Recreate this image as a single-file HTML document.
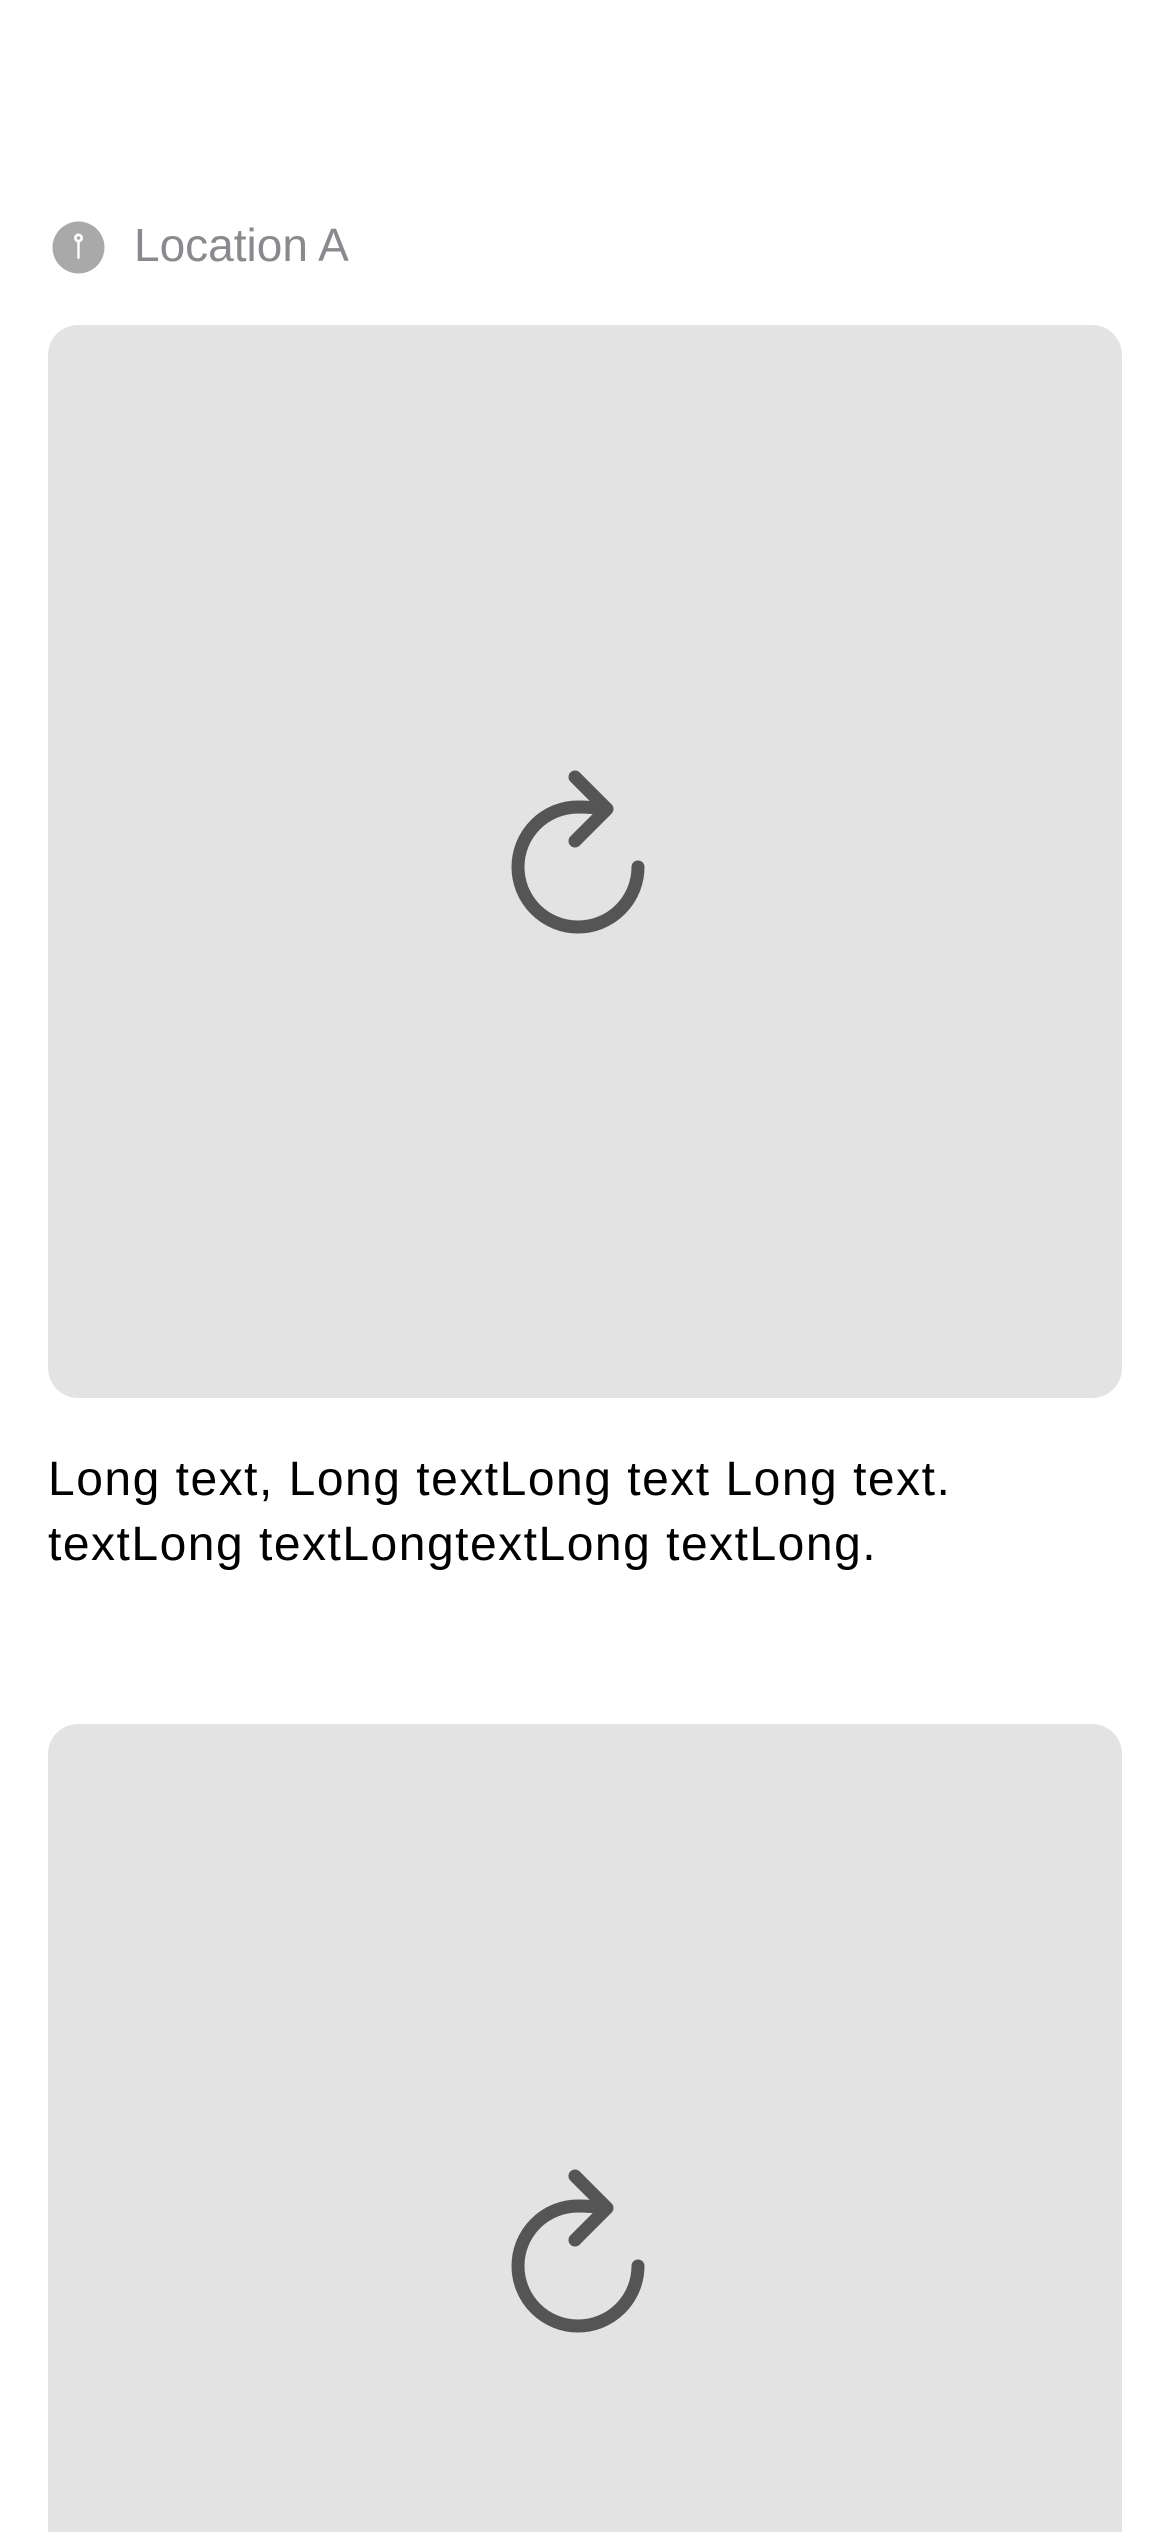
<!DOCTYPE html>
<html><head><meta charset="utf-8"><style>
html,body{margin:0;padding:0;background:#fff;width:1170px;height:2532px;overflow:hidden;font-family:"Liberation Sans",sans-serif;position:relative}
.card{position:absolute;left:48px;width:1074px;height:1073px;background:#e3e3e3;border-radius:30px}
.c2{height:808px;border-bottom-left-radius:0;border-bottom-right-radius:0}
.loc{position:absolute;left:134px;top:217px;font-size:46px;color:#8a8a8e;line-height:56px}
.txt{position:absolute;left:48px;top:1447px;font-size:48px;line-height:65px;color:#000;width:1100px;letter-spacing:1.5px}
svg{position:absolute}
</style></head><body>
<svg style="left:52px;top:221px" width="54" height="54" viewBox="0 0 54 54">
<circle cx="26.5" cy="26.5" r="26" fill="#a9a9a9"/>
<circle cx="26.5" cy="17" r="4.5" fill="#fff"/>
<circle cx="26.5" cy="17" r="1.8" fill="#a9a9a9"/>
<rect x="25.3" y="20" width="2.4" height="18" rx="1.2" fill="#fff"/>
</svg>
<div class="loc">Location A</div>
<div class="card" style="top:325px"></div>
<svg style="left:500px;top:760px" width="160" height="190" viewBox="500 760 160 190">
<g fill="none" stroke="#555" stroke-width="13" stroke-linecap="round" stroke-linejoin="round">
<path d="M605 809 Q592 807 578 807 A60 60 0 1 0 638 867"/>
<path d="M575 777 L607 809 L575 841"/>
</g></svg>
<div class="txt">Long text, Long textLong text Long text.<br>textLong textLongtextLong textLong.</div>
<div class="card c2" style="top:1724px"></div>
<svg style="left:500px;top:2159px" width="160" height="190" viewBox="500 760 160 190">
<g fill="none" stroke="#555" stroke-width="13" stroke-linecap="round" stroke-linejoin="round">
<path d="M605 809 Q592 807 578 807 A60 60 0 1 0 638 867"/>
<path d="M575 777 L607 809 L575 841"/>
</g></svg>
</body></html>
